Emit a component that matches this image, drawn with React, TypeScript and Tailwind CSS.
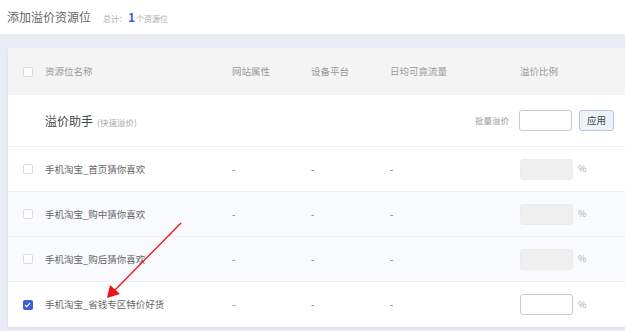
import React from 'react';

const FONT = { fontFamily: '"Noto Sans CJK SC", "Noto Sans", sans-serif' };

interface Row {
  name: string;
  checked: boolean;
  tint: boolean;
}

const ROWS: Row[] = [
  { name: '手机淘宝_首页猜你喜欢', checked: false, tint: false },
  { name: '手机淘宝_购中猜你喜欢', checked: false, tint: true },
  { name: '手机淘宝_购后猜你喜欢', checked: false, tint: true },
  { name: '手机淘宝_省钱专区特价好货', checked: true, tint: false },
];

function Checkbox({ checked }: { checked?: boolean }) {
  if (checked) {
    return (
      <span className="flex h-[10px] w-[10px] items-center justify-center rounded-[2px] bg-[#3b5fd8]">
        <svg width="7" height="6" viewBox="0 0 7 6">
          <path d="M1 3 L2.8 4.7 L6 1.2" fill="none" stroke="#fff" strokeWidth="1.2" />
        </svg>
      </span>
    );
  }
  return <span className="block h-[10px] w-[10px] rounded-[2px] border border-[#dcdcdc] bg-white" />;
}

export default function App() {
  return (
    <div className="relative h-[331px] w-[625px] overflow-hidden bg-[#e9ecf4]" style={FONT}>
      {/* Title bar */}
      <div className="flex h-[34px] items-center bg-white pl-[7px]">
        <span className="text-[12px] text-[#666]">添加溢价资源位</span>
        <span className="ml-[12px] flex items-baseline text-[8px] text-[#aaa]">
          总计：
          <b className="mx-[1px] text-[12px] text-[#3b5fd8]">1</b>
          个资源位
        </span>
      </div>

      {/* Card */}
      <div className="ml-[8px] mt-[14px] w-[640px] overflow-hidden rounded-[2px] bg-white shadow-[0_1px_3px_rgba(0,0,0,0.08)]">
        {/* Header */}
        <div className="flex h-[47px] items-center bg-[#f4f4f4] text-[9.5px] text-[#9a9a9a]">
          <div className="flex w-[37px] justify-center pl-[2px]">
            <Checkbox />
          </div>
          <div className="w-[187px]">资源位名称</div>
          <div className="w-[79px]">网站属性</div>
          <div className="w-[79px]">设备平台</div>
          <div className="w-[130px]">日均可竟流量</div>
          <div className="flex-1">溢价比例</div>
        </div>

        {/* Quick premium */}
        <div className="flex h-[52px] items-center border-b border-[#efefef]">
          <div className="w-[37px]" />
          <div className="flex flex-1 items-baseline">
            <span className="text-[12px] text-[#444]">溢价助手</span>
            <span className="ml-[4px] text-[8.5px] text-[#aaa]">(快速溢价)</span>
          </div>
          <span className="mr-[10px] text-[8.5px] text-[#999]">批量溢价</span>
          <div className="h-[21px] w-[53px] rounded-[3px] border border-[#c9c9c9] bg-white" />
          <button className="ml-[7px] mr-[34px] flex h-[21px] w-[35px] items-center justify-center rounded-[3px] border border-[#b9c6e0] bg-[#eef2fa] text-[9.5px] text-[#444]">
            应用
          </button>
        </div>

        {ROWS.map((r, i) => (
          <div
            key={r.name}
            className={`flex h-[45px] items-center text-[9.5px] text-[#666] ${i < ROWS.length - 1 ? 'border-b border-[#edeef2]' : ''} ${r.tint ? 'bg-[#f9fafd]' : 'bg-white'}`}
          >
            <div className="flex w-[37px] justify-center pl-[2px]">
              <Checkbox checked={r.checked} />
            </div>
            <div className="w-[187px]">{r.name}</div>
            <div className="w-[79px]">-</div>
            <div className="w-[79px]">-</div>
            <div className="w-[130px]">-</div>
            <div className="flex flex-1 items-center">
              <div
                className={`h-[21px] w-[53px] rounded-[3px] border ${r.checked ? 'border-[#c9c9c9] bg-white' : 'border-[#ececec] bg-[#efefef]'}`}
              />
              <span className="ml-[5px] text-[9px] text-[#aaa]">%</span>
            </div>
          </div>
        ))}
      </div>

      {/* Red annotation arrow */}
      <svg className="absolute left-0 top-0" width="625" height="331" viewBox="0 0 625 331">
        <line x1="181" y1="223" x2="114" y2="291" stroke="#ee1111" strokeWidth="1.3" />
        <polygon points="107,298 110,285 120,294" fill="#ee1111" />
      </svg>
    </div>
  );
}
